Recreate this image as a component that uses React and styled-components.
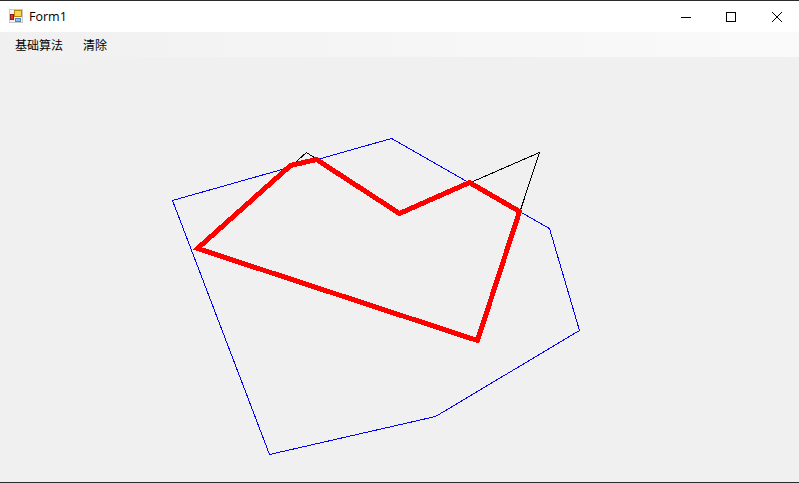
import React from 'react'
import styled, { createGlobalStyle } from 'styled-components'

const GlobalStyle = createGlobalStyle`
  html, body {
    margin: 0;
    padding: 0;
    background: #f0f0f0;
    overflow: hidden;
  }
`

const Window = styled.div`
  display: flex;
  flex-direction: column;
  width: 799px;
  height: 483px;
  box-sizing: border-box;
  overflow: hidden;
  border-top: 1px solid #2b2b2b;
  border-bottom: 1px solid #2b2b2b;
  font-family: "Noto Sans CJK SC", "Liberation Sans", sans-serif;
  color: #000;
`

const TitleBar = styled.div`
  display: flex;
  align-items: center;
  height: 31px;
  background: #fff;
  flex: none;
`

const AppIcon = styled.svg`
  width: 14px;
  height: 14px;
  margin: -1px 0 0 9px;
  flex: none;
`

const Title = styled.span`
  margin-left: 6px;
  font-family: "Open Sans", "Liberation Sans", sans-serif;
  font-size: 12.5px;
  line-height: 31px;
`

const WindowButtons = styled.div`
  display: flex;
  margin-left: auto;
  margin-right: -1px;
`

const WindowButton = styled.div`
  display: flex;
  align-items: center;
  justify-content: center;
  width: ${p => p.$width || 46}px;
  height: 31px;
`

const MenuBar = styled.div`
  display: flex;
  align-items: center;
  height: 25px;
  padding-left: 5px;
  flex: none;
  background: linear-gradient(90deg, #f0f0f0 0%, #f5f5f5 45%, #fafafa 100%);
`

const MenuItem = styled.div`
  padding: 0 10px;
  font-size: 12px;
  line-height: 25px;
`

const Canvas = styled.svg`
  display: block;
  flex: 1;
  width: 799px;
  background: #f0f0f0;
`

// points are in window coordinates, the canvas starts 57px down
const subject = '197,248 306,152 399,213 539,152 477,340'
const clip = '172,200 391,138 549,228 579,330 435,416 269,454'
const result = '197,248 290,165 316,159 399,213 469,182 519,211 477,340'

export default function App() {
  return (
    <Window>
      <GlobalStyle />
      <TitleBar>
        <AppIcon viewBox="0 0 14 14" shapeRendering="crispEdges">
          <rect x="0" y="0" width="14" height="14" fill="#c9c9c9" />
          <rect x="1" y="1" width="12" height="12" fill="#f4f4f4" />
          <rect x="5" y="1" width="8" height="7" fill="#b8860b" />
          <rect x="6" y="2" width="6" height="5" fill="#fbd34d" />
          <rect x="1" y="5" width="4" height="6" fill="#8a1c1c" />
          <rect x="2" y="6" width="2" height="4" fill="#e8322a" />
          <rect x="6" y="9" width="6" height="4" fill="#4f81d0" />
          <rect x="7" y="10" width="4" height="2" fill="#9cc3f0" />
        </AppIcon>
        <Title>Form1</Title>
        <WindowButtons>
          <WindowButton $width={44}>
            <svg width="10" height="10" viewBox="0 0 10 10" shapeRendering="crispEdges">
              <rect x="0" y="5" width="10" height="1" fill="#000" />
            </svg>
          </WindowButton>
          <WindowButton>
            <svg width="10" height="10" viewBox="0 0 10 10" shapeRendering="crispEdges">
              <rect x="0.5" y="0.5" width="9" height="9" fill="none" stroke="#000" />
            </svg>
          </WindowButton>
          <WindowButton>
            <svg width="10" height="10" viewBox="0 0 10 10">
              <path d="M0 0L10 10M10 0L0 10" stroke="#000" strokeWidth="1" fill="none" />
            </svg>
          </WindowButton>
        </WindowButtons>
      </TitleBar>
      <MenuBar>
        <MenuItem>基础算法</MenuItem>
        <MenuItem>清除</MenuItem>
      </MenuBar>
      <Canvas viewBox="0 57 799 425" shapeRendering="crispEdges">
        <g transform="translate(0.5 0.5)">
          <polygon points={subject} fill="none" stroke="#000" strokeWidth="1" />
          <polygon points={clip} fill="none" stroke="#0000ff" strokeWidth="1" />
          <polygon points={result} fill="none" stroke="#ff0000" strokeWidth="5" />
        </g>
      </Canvas>
    </Window>
  )
}
